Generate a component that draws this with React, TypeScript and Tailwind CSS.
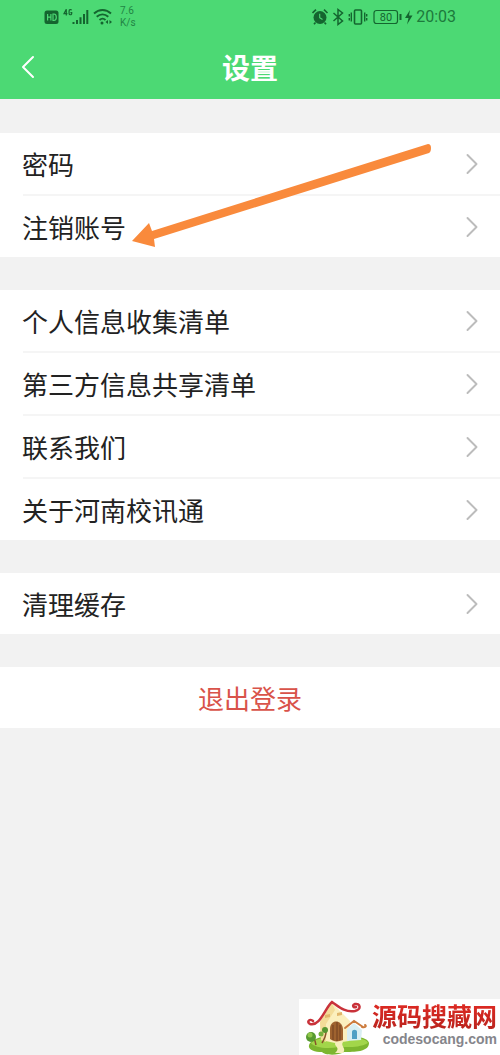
import { ChevronLeft, ChevronRight } from "lucide-react";

const groups = [
  ["密码", "注销账号"],
  ["个人信息收集清单", "第三方信息共享清单", "联系我们", "关于河南校讯通"],
  ["清理缓存"],
];

function StatusBar() {
  return (
    <div className="flex h-[34px] items-center justify-between pl-11 pr-11 text-[#14652f]">
      <div className="flex items-center">
        {/* HD, signal, wifi */}
        <svg width="70" height="20" viewBox="0 0 70 20" fill="none" aria-hidden="true">
          <rect x="0.5" y="3.5" width="14" height="13.5" rx="2.5" fill="#14652f" />
          <path d="M3.6 7v6.5M6.9 7v6.5M3.6 10.2h3.3M9 7v6.5h1c1.6 0 2.3-1 2.3-3.2S11.600 7 10 7z" stroke="#4cd974" strokeWidth="1.2" />
          <path d="M22.300 8.500V2.300L20 6.700h3.400M27.600 3.300c-.5-1-2.500-1.100-2.500.6v2.500c0 1.800 2.600 1.800 2.600.1V5.600h-1.300" stroke="#14652f" strokeWidth="1.200" />
          <path d="M29.500 15v2M33 13v4M36.500 10.300V17M40 7v10M43.300 3v14" stroke="#14652f" strokeWidth="2" />
          <path d="M50 6.500c5-4.700 12-4.700 17 0M52.700 9.800c3.500-3.200 8.100-3.200 11.600 0M55.500 13c1.900-1.700 4.200-1.700 6 0" stroke="#14652f" strokeWidth="1.900" />
          <circle cx="58" cy="16" r="1.500" fill="#14652f" />
          <path d="M64 13l-2.500 2L64 17zM65.500 13l2.500 2-2.500 2z" fill="#14652f" />
        </svg>
        <div className="ml-[6px] font-['Roboto',sans-serif] text-[10px] leading-[12px] text-[#228544]">
          <div>7.6</div>
          <div>K/s</div>
        </div>
      </div>
      <div className="flex items-center">
        {/* alarm, bluetooth, vibrate, battery, charging */}
        <svg width="104" height="20" viewBox="0 0 104 20" fill="none" stroke="#14652f" aria-hidden="true">
          <circle cx="8" cy="10.500" r="6.500" fill="#14652f" stroke="none" />
          <path d="M.5 6L4 2.700M15.500 6L12 2.700M3.500 15.500L2 17.200M12.500 15.500l1.500 1.700" strokeWidth="1.700" />
          <path d="M7.700 6.700v4l2.800 1.800" stroke="#4cd974" strokeWidth="1.100" />
          <path d="M21.500 6l9 8-4.500 3.500v-15L30.500 6l-9 8" strokeWidth="1.500" />
          <rect x="42.500" y="3" width="7" height="14" rx="1" strokeWidth="1.600" />
          <path d="M39.300 5.500v9M37.300 7v2.500M37.300 11v2.500M52.700 5.500v9M54.700 7v2.500M54.700 11v2.500" strokeWidth="1.400" />
          <rect x="62" y="3.500" width="23.500" height="13" rx="2.500" strokeWidth="1.200" />
          <path d="M88.500 7v6" strokeWidth="2" />
          <text x="74" y="14" textAnchor="middle" fill="#14652f" stroke="none" className="font-['Roboto',sans-serif] text-[11px]">
            80
          </text>
          <path d="M98 3l-5 8h3.500l-1.500 6.500 5.500-9H97z" fill="#14652f" stroke="none" />
        </svg>
        <span className="font-['Roboto',sans-serif] text-[16px] leading-5 text-[#1d7a3c]">20:03</span>
      </div>
    </div>
  );
}

function Watermark() {
  return (
    <div className="absolute bottom-0 right-0 flex h-14 w-[201px] items-start justify-between bg-white pl-1 pr-[3px]">
      <svg width="68" height="56" viewBox="0 0 68 56" fill="none" aria-hidden="true">
        <path d="M7 44c6-6 14-7 23-7 15-1 35 0 36 7 0 9-15 9-25 9-7 4-20 3-22 0-9 0-16-3-12-9z" fill="#7db62f" />
        <path d="M8 44c6-5 14-5 23-6 15-1 33 1 34 6-9 5-20 4-29 4-12 2-24 1-28-4z" fill="#a2d64a" />
        <path d="M17 23L29 4l18 18-1 20-14 2-14-3z" fill="#fbefbd" />
        <path d="M17 23L29 4l3 7-9 14v18l-5-2z" fill="#f3dc98" />
        <path d="M44 30l7-6 8 7-1 10-14 1z" fill="#d9eef2" />
        <path d="M42 29l9-7 9 6M59 28c3 1 5-1 3-2" stroke="#cc7b3d" strokeWidth="2" strokeLinecap="round" />
        <path d="M49 40v-7c0-3 5-3 5 0v7z" fill="#4e9fc4" />
        <path d="M27 40V30c0-10 12-10 13 0v11c-5 2-9 2-13-1z" fill="#9f632f" />
        <path d="M30 41V26M34 42V23M37 41V26" stroke="#704020" strokeWidth="1" />
        <path d="M22 16l5-1v3l-5 1zM34 14l5-1v3l-5 1z" fill="#e1b66b" />
        <path d="M10 22c-3-3-7 1-3 3 10 3 15-16 22-22 6 4 13 11 23 9 7-2 5-8 0-7-3 1-2 4 1 3" stroke="#c9323a" strokeWidth="2.500" strokeLinecap="round" />
        <path d="M13 46c-1-5-2-8-4-10M19 44c3-5 4-7 4-11" stroke="#875329" strokeWidth="1.500" />
        <circle cx="8" cy="38" r="5" fill="#579a30" />
        <circle cx="7" cy="36" r="2.500" fill="#8fc64a" />
        <circle cx="22" cy="31" r="3" fill="#559630" />
        <circle cx="18" cy="35" r="2.500" fill="#75b03c" />
        <path d="M33 43c-4 4 6 5-1 11h8c4-5-3-7 0-11z" fill="#f7efbc" />
      </svg>
      <div className="flex flex-col items-end">
        <span className="bg-linear-to-b from-[#e52b24] to-[#b8231d] bg-clip-text font-['Noto_Sans_CJK_SC',sans-serif] text-[25px] font-bold leading-8 text-transparent">
          源码搜藏网
        </span>
        <span className="font-['Liberation_Sans',sans-serif] text-[14px] font-bold leading-4 text-[#85858b]">codesocang.com</span>
      </div>
    </div>
  );
}

export default function App() {
  return (
    <div className="relative min-h-screen bg-[#f2f2f2] font-['KaiTi','Noto_Sans_CJK_SC',sans-serif] text-[#222222]">
      <header className="bg-[#4cd974]">
        <StatusBar />
        <div className="grid h-[65px] grid-cols-[1fr_auto_1fr] items-center">
          <button aria-label="返回" className="ml-2 w-10 text-white">
            <ChevronLeft size={40} strokeWidth={1.2} />
          </button>
          <h1 className="text-[28px] font-bold leading-8 text-white">设置</h1>
        </div>
      </header>

      <main className="relative flex flex-col gap-[33px] pt-[34px]">
        {groups.map((items) => (
          <ul key={items[0]} className="bg-white">
            {items.map((label, i) => (
              <li key={label}>
                {i > 0 && <div className="ml-[23px] h-[2px] bg-[#f5f5f5]" />}
                <button className="flex h-[61px] w-full items-center justify-between pl-[22px] pr-[10px] text-left">
                  <span className="text-[26px] leading-8">{label}</span>
                  <ChevronRight size={36} strokeWidth={1.3} className="text-[#bcbcbc]" />
                </button>
              </li>
            ))}
          </ul>
        ))}
        <button className="h-[61px] bg-white text-center text-[26px] leading-8 text-[#d9534a]">退出登录</button>

        {/* arrow pointing at the second row */}
        <svg
          className="pointer-events-none absolute left-[132px] top-[44px]"
          width="302"
          height="106"
          viewBox="0 0 302 106"
          aria-hidden="true"
        >
          <path d="M0 98L17 80l3 8L296 1q3 0 3 4t-2 5L22 96l1 8z" fill="#f98a3c" />
        </svg>
      </main>

      <Watermark />
    </div>
  );
}
